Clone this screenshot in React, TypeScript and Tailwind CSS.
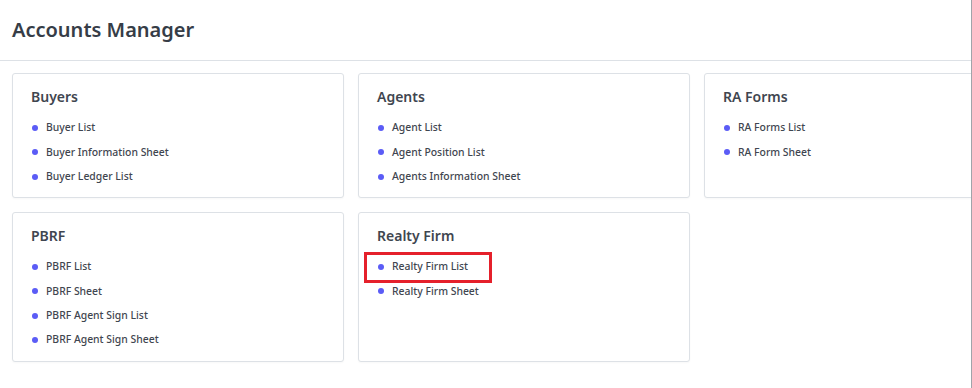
import React from 'react';

type Section = {
  title: string;
  links: string[];
};

const rowOne: Section[] = [
  { title: 'Buyers', links: ['Buyer List', 'Buyer Information Sheet', 'Buyer Ledger List'] },
  { title: 'Agents', links: ['Agent List', 'Agent Position List', 'Agents Information Sheet'] },
  { title: 'RA Forms', links: ['RA Forms List', 'RA Form Sheet'] },
];

const rowTwo: Section[] = [
  { title: 'PBRF', links: ['PBRF List', 'PBRF Sheet', 'PBRF Agent Sign List', 'PBRF Agent Sign Sheet'] },
  { title: 'Realty Firm', links: ['Realty Firm List', 'Realty Firm Sheet'] },
];

const SectionCard: React.FC<{ section: Section; height: string; highlight?: string }> = ({
  section,
  height,
  highlight,
}) => (
  <div
    className={`w-[332px] ${height} shrink-0 rounded-[3px] border border-[#dde1e6] bg-white px-[18px] pt-[14px] shadow-[0_1px_2px_rgba(0,0,0,0.03)]`}
  >
    <h3 className="text-[14px] font-semibold leading-[18px] text-[#3f4650]">{section.title}</h3>
    <ul className="mt-[10px]">
      {section.links.map((link) => (
        <li key={link} className="relative flex h-[24.3px] items-center gap-[8px] pl-[1px]">
          <span className="h-[6px] w-[6px] rounded-full bg-[#5b5cf6]" />
          <span className="text-[10.4px] font-medium text-[#3f4650]">{link}</span>
          {highlight === link && (
            <span className="pointer-events-none absolute left-[-13px] top-[-3px] h-[31px] w-[128px] border-[3px] border-[#e5202b]" />
          )}
        </li>
      ))}
    </ul>
  </div>
);

export default function App() {
  return (
    <div
      className="h-[388px] w-[972px] overflow-hidden border-r border-[#a0a4aa] bg-white"
      style={{ fontFamily: '"Noto Sans", "Open Sans", sans-serif' }}
    >
      <header className="flex h-[61px] items-center border-b border-[#dde1e6] px-[12px]">
        <h1 className="text-[20px] font-semibold text-[#363d47]">Accounts Manager</h1>
      </header>
      <div className="flex flex-col gap-[14px] px-[12px] pt-[12px]">
        <div className="flex gap-[14px]">
          {rowOne.map((s) => (
            <SectionCard key={s.title} section={s} height="h-[125px]" />
          ))}
        </div>
        <div className="flex gap-[14px]">
          {rowTwo.map((s) => (
            <SectionCard key={s.title} section={s} height="h-[150px]" highlight="Realty Firm List" />
          ))}
        </div>
      </div>
    </div>
  );
}
